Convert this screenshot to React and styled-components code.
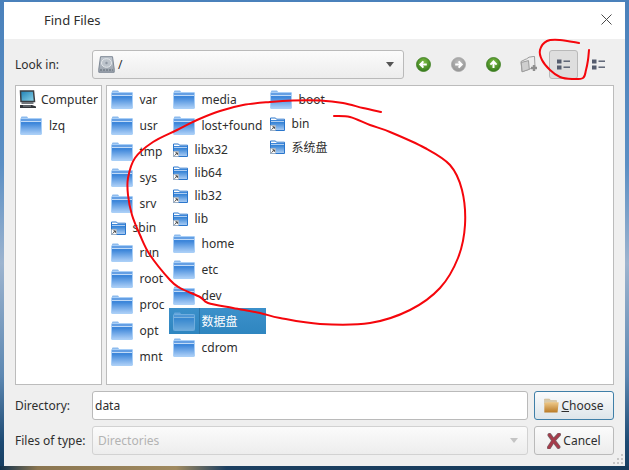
import React from "react";
import styled, { createGlobalStyle } from "styled-components";

const leftColumn = ["var", "usr", "tmp", "sys", "srv", "~sbin", "run", "root", "proc", "opt", "mnt"];
const midColumn = ["media", "lost+found", "~libx32", "~lib64", "~lib32", "~lib", "home", "etc", "dev", "*数据盘", "cdrom"];
const rightColumn = ["boot", "~bin", "~系统盘"];

// hand-drawn marks, traced from the picture
const bigLoop = [
  [381, 112], [363, 108], [343, 103], [320, 100.5], [293, 100.5], [270, 102], [243, 105], [220, 111], [197, 120],
  [177, 130], [153, 142], [135, 158], [128, 178], [128, 195], [132, 215], [140, 235], [150, 255], [170, 280],
  [180, 288], [200, 297], [208, 303], [233, 308], [260, 313], [280, 318], [320, 324], [370, 323], [410, 310],
  [440, 288], [458, 258], [465, 225], [462, 190], [450, 165], [425, 148], [390, 132], [370, 125], [350, 117], [334, 116],
];
const smallLoop = [
  [579, 43], [560, 40], [547, 41], [540, 50], [542, 60], [550, 70], [560, 77], [572, 79], [583, 78], [586, 70], [588, 60], [589, 50],
];

const smoothPath = (pts) => {
  let d = `M${pts[0][0]} ${pts[0][1]}`;
  for (let i = 0; i < pts.length - 1; i++) {
    const p0 = pts[i - 1] || pts[i];
    const p1 = pts[i];
    const p2 = pts[i + 1];
    const p3 = pts[i + 2] || p2;
    const c1x = p1[0] + (p2[0] - p0[0]) / 6;
    const c1y = p1[1] + (p2[1] - p0[1]) / 6;
    const c2x = p2[0] - (p3[0] - p1[0]) / 6;
    const c2y = p2[1] - (p3[1] - p1[1]) / 6;
    d += `C${c1x} ${c1y} ${c2x} ${c2y} ${p2[0]} ${p2[1]}`;
  }
  return d;
};

const GlobalStyle = createGlobalStyle`
  html, body {
    margin: 0;
    padding: 0;
  }
  body {
    font-family: "Noto Sans", "Noto Sans CJK SC", sans-serif;
    font-size: 12px;
    color: #2e2e2e;
  }
`;

const Page = styled.div`
  position: relative;
  box-sizing: border-box;
  width: 629px;
  height: 470px;
  padding: 2px 4px 4px;
  overflow: hidden;
  background:
    linear-gradient(90deg, #12324e 0, #8a7550 6%, #a08a60 28%, #1c3f60 36%, #163a5a 100%) bottom / 100% 4px no-repeat,
    linear-gradient(180deg, #4a81bb 0, #5b8fc4 35%, #9db4cf 56%, #5d88b2 80%, #1d4a73 94%, #173d60 100%);
`;

const Dialog = styled.div`
  position: relative;
  display: flex;
  flex-direction: column;
  height: 100%;
  background: #efefef;
`;

const TitleBar = styled.div`
  display: flex;
  align-items: center;
  justify-content: space-between;
  flex: 0 0 37px;
  padding: 0 13px 0 40px;
  background: #fff;
`;

const Title = styled.span`
  font-size: 13px;
  margin-top: -2px;
`;

const Content = styled.div`
  display: flex;
  flex-direction: column;
  gap: 6px;
  flex: 1;
  padding: 11px;
  min-height: 0;
`;

const LookRow = styled.div`
  display: flex;
  align-items: center;
`;

const FieldLabel = styled.label`
  flex: 0 0 77px;
`;

const Combo = styled.div`
  box-sizing: border-box;
  display: flex;
  align-items: center;
  height: 29px;
  width: ${(p) => p.$width || "auto"};
  padding: 0 5px;
  border: 1px solid ${(p) => (p.$disabled ? "#d2d2d2" : "#bababa")};
  border-radius: 3px;
  background: linear-gradient(180deg, #fbfbfb, #ededed);
  color: ${(p) => (p.$disabled ? "#b3b3b3" : "#2e2e2e")};
`;

const ComboText = styled.span`
  flex: 1;
  margin-left: ${(p) => p.$offset || 0}px;
`;

const Arrow = styled.span`
  width: 0;
  height: 0;
  margin-right: 4px;
  border-left: 4px solid transparent;
  border-right: 4px solid transparent;
  border-top: 5px solid ${(p) => (p.$disabled ? "#c4c4c4" : "#555")};
`;

const Tools = styled.div`
  display: flex;
  gap: 6px;
  margin-left: 5px;
`;

const ToolButton = styled.div`
  box-sizing: border-box;
  display: flex;
  align-items: center;
  justify-content: center;
  width: 29px;
  height: 29px;
  border: 1px solid ${(p) => (p.$active ? "#b9b9b9" : "transparent")};
  border-radius: 3px;
  background: ${(p) => (p.$active ? "#dedede" : "transparent")};
`;

const Panels = styled.div`
  display: flex;
  gap: 4px;
  flex: 0 0 300px;
`;

const Sidebar = styled.div`
  box-sizing: border-box;
  flex: 0 0 87px;
  border: 1px solid #bcbcbc;
  background: #fff;
  overflow: hidden;
`;

const SideItem = styled.div`
  display: flex;
  align-items: center;
  gap: ${(p) => p.$gap}px;
  height: 26px;
  padding-left: ${(p) => p.$indent}px;
  white-space: nowrap;
`;

const FileList = styled.div`
  box-sizing: border-box;
  display: flex;
  align-items: flex-start;
  flex: 1;
  border: 1px solid #bcbcbc;
  background: #fff;
`;

const FileColumn = styled.div`
  display: flex;
  flex-direction: column;
  flex: 0 0 ${(p) => p.$width}px;
`;

const FileItem = styled.div`
  display: flex;
  align-items: center;
  height: ${(p) => (p.$link ? 23 : 26)}px;
  padding-left: 3.5px;
  white-space: nowrap;
  color: ${(p) => (p.$selected ? "#fff" : "inherit")};
  background: ${(p) => (p.$selected ? "linear-gradient(180deg, #3c90ca, #2f86c0)" : "transparent")};

  svg {
    opacity: ${(p) => (p.$selected ? 0.5 : 1)};
  }
`;

const FileName = styled.span`
  display: flex;
  align-items: center;
  align-self: stretch;
  flex: 1;
  margin-left: ${(p) => (p.$selected ? 4 : 7)}px;
  padding-left: ${(p) => (p.$selected ? 2 : 0)}px;
  border-left: ${(p) => (p.$selected ? "1px solid #2a76ab" : "none")};
`;

const BottomGrid = styled.div`
  display: grid;
  grid-template-columns: 77px 436px 80px;
  grid-auto-rows: 29px;
  row-gap: 6px;
  align-items: center;
`;

const TextInput = styled.div`
  box-sizing: border-box;
  display: flex;
  align-items: center;
  height: 29px;
  padding: 0 2px;
  border: 1px solid #bababa;
  border-radius: 3px;
  background: #fff;
`;

const ActionButton = styled.button`
  box-sizing: border-box;
  display: flex;
  align-items: center;
  justify-content: center;
  gap: 2px;
  height: 29px;
  margin-left: 6px;
  width: 80px;
  padding: 0;
  border: 1px solid ${(p) => (p.$focused ? "#3f7fa8" : "#bababa")};
  border-radius: 3px;
  background: ${(p) => (p.$focused ? "linear-gradient(180deg, #fafbfc, #dde5ea)" : "linear-gradient(180deg, #fbfbfb, #ececec)")};
  color: #2e2e2e;
  font: inherit;
`;

const Mnemonic = styled.span`
  text-decoration: underline;
`;

const GripDots = styled.svg`
  position: absolute;
  right: 1px;
  bottom: 1px;
`;

const Scribble = styled.svg`
  position: absolute;
  top: 0;
  left: 0;
  pointer-events: none;
`;

const HiddenDefs = styled.svg`
  position: absolute;
  width: 0;
  height: 0;
`;

const SharedGradients = () => (
  <HiddenDefs aria-hidden="true">
    <defs>
      <linearGradient id="folderFill" x1="0" y1="0" x2="0" y2="1">
        <stop offset="0" stopColor="#327fd7" />
        <stop offset="1" stopColor="#a9cdf6" />
      </linearGradient>
      <linearGradient id="linkFill" x1="0" y1="0" x2="0" y2="1">
        <stop offset="0" stopColor="#2f7fd4" />
        <stop offset="1" stopColor="#a8cbf3" />
      </linearGradient>
      <linearGradient id="orangeFill" x1="0" y1="0" x2="0" y2="1">
        <stop offset="0" stopColor="#eec98a" />
        <stop offset="1" stopColor="#b97a26" />
      </linearGradient>
      <linearGradient id="screenFill" x1="0" y1="0" x2="1" y2="1">
        <stop offset="0" stopColor="#1c7fb4" />
        <stop offset="1" stopColor="#8fd6ea" />
      </linearGradient>
      <linearGradient id="driveFill" x1="0" y1="0" x2="0" y2="1">
        <stop offset="0" stopColor="#c4cbd3" />
        <stop offset="1" stopColor="#98a0aa" />
      </linearGradient>
      <radialGradient id="greenFill" cx="0.5" cy="0.35" r="0.7">
        <stop offset="0" stopColor="#7fbf45" />
        <stop offset="1" stopColor="#2f7318" />
      </radialGradient>
      <radialGradient id="greyFill" cx="0.5" cy="0.35" r="0.7">
        <stop offset="0" stopColor="#bdbdbd" />
        <stop offset="1" stopColor="#8f8f8f" />
      </radialGradient>
    </defs>
  </HiddenDefs>
);

const FolderIcon = () => (
  <svg width="22" height="19" viewBox="0 0 22 19" style={{ flex: "none" }}>
    <path d="M1 1.5q0-1 1-1h5l1.5 2H21q.8 0 .8 1V4H1z" fill="#8dbbee" />
    <rect x="0.5" y="2.5" width="21" height="16" rx="0.8" fill="#6ca6e9" stroke="#a9cff7" />
    <rect x="1" y="3" width="20" height="2.2" fill="#649fe4" />
    <rect x="1" y="5.2" width="20" height="0.9" fill="#d8e9fb" />
    <rect x="1" y="6.1" width="20" height="11.9" fill="url(#folderFill)" />
  </svg>
);

const LinkFolderIcon = () => (
  <svg width="15" height="14" viewBox="0 0 15 14" style={{ flex: "none" }}>
    <path d="M.5 2V1h5l1 1.2h8V13.5H.5z" fill="#fff" stroke="#2a76cc" />
    <rect x="1" y="3" width="13" height="1.4" fill="#3b86d9" />
    <rect x="1" y="5" width="13" height="8" fill="url(#linkFill)" />
    <rect x="0.5" y="8.5" width="5" height="5" fill="#fff" stroke="#a5a5a5" strokeWidth="0.5" />
    <path d="M1.6 12.6 4.2 10M2.4 9.8h2v2" fill="none" stroke="#444" strokeWidth="1" />
  </svg>
);

const ComputerIcon = () => (
  <svg width="18" height="19" viewBox="0 0 18 19" style={{ flex: "none" }}>
    <path d="M1.5 1h13l1 10.5H2z" fill="url(#screenFill)" stroke="#3b3f44" strokeWidth="1.5" />
    <rect x="2.5" y="12" width="12" height="2" fill="#70757b" />
    <path d="M1 15h12l4 1.5V18H1z" fill="#33373c" />
    <path d="M4 16h8" stroke="#8a8f95" />
  </svg>
);

const DriveIcon = () => (
  <svg width="17" height="17" viewBox="0 0 17 17" style={{ flex: "none" }}>
    <path d="M2.5.7h12l1.700 12.300v3.300H.8V13z" fill="url(#driveFill)" stroke="#7d8794" />
    <ellipse cx="8.5" cy="7" rx="5" ry="4.3" fill="#bcc3cb" stroke="#e2e6ea" />
    <circle cx="8.5" cy="7" r="1.2" fill="#8d96a1" />
    <path d="M2 14h13" stroke="#5f6872" strokeDasharray="2 1" />
  </svg>
);

const NavIcon = ({ direction, muted }) => {
  const arrows = {
    left: "M10.8 7.5H4.600M7.4 4.4 4.3 7.5l3.100 3.100",
    right: "M4.2 7.5h6.200M7.6 4.4l3.100 3.100-3.100 3.100",
    up: "M7.5 11V4.800M4.4 7.6l3.100-3.100 3.100 3.100",
  };
  return (
    <svg width="15" height="15" viewBox="0 0 15 15">
      <circle cx="7.5" cy="7.5" r="7" fill={muted ? "url(#greyFill)" : "url(#greenFill)"} stroke={muted ? "#a8a8a8" : "#3d7f22"} strokeWidth="0.8" />
      <path d={arrows[direction]} fill="none" stroke="#fff" strokeWidth="2" />
    </svg>
  );
};

const NewFolderIcon = () => (
  <svg width="18" height="17" viewBox="0 0 18 17">
    <path d="M1 5.5 6 3l.6-.1L9 1.200l5.500-.9.500 10.700L2 15.800z" fill="#ececec" stroke="#9c9c9c" />
    <path d="M1.2 6.5 8.5 4.600l.8 8.800-7.100 2.300z" fill="#cfcfcf" stroke="#9c9c9c" />
    <path d="M14 9v6M11 12h6" stroke="#8e8e8e" strokeWidth="2.4" />
  </svg>
);

const DetailViewIcon = () => (
  <svg width="13" height="11" viewBox="0 0 13 11">
    <rect x="0" y="0.5" width="4.5" height="4" fill="#555c6e" />
    <rect x="0" y="6.5" width="4.5" height="4" fill="#555c6e" />
    <rect x="6.5" y="1.5" width="6.5" height="1.4" fill="#555c6e" />
    <rect x="6.5" y="7.5" width="6.5" height="1.4" fill="#555c6e" />
  </svg>
);

const CloseIcon = () => (
  <svg width="11" height="11" viewBox="0 0 11 11" style={{ marginTop: -2 }}>
    <path d="M.5.5l10 10M10.5.5l-10 10" stroke="#4a4a4a" strokeWidth="1" />
  </svg>
);

const OpenFolderIcon = () => (
  <svg width="15" height="15" viewBox="0 0 15 15" style={{ flex: "none" }}>
    <path d="M.5 2V1h5l1 1.5h6V6H.5z" fill="#d9c9a8" stroke="#c8b48c" strokeWidth="0.5" />
    <path d="M.3 14.5V5l3-.8h11.400L13.500 14.500z" fill="url(#orangeFill)" />
  </svg>
);

const CancelIcon = () => (
  <svg width="14" height="16" viewBox="0 0 14 16" style={{ flex: "none" }}>
    <g fill="none" strokeLinecap="round">
      <path d="M2.5 2 Q6 7 11.500 14M12 1.500 Q6 7 2 14.500" stroke="#77696c" strokeWidth="4" />
      <path d="M2.5 2 Q6 7 11.500 14M12 1.500 Q6 7 2 14.500" stroke="#a53c4b" strokeWidth="2.8" />
    </g>
  </svg>
);

const ResizeGrip = () => (
  <GripDots width="12" height="12" viewBox="0 0 12 12" fill="#c6c6c6">
    {[[9, 0], [5, 4], [9, 4], [1, 8], [5, 8], [9, 8]].map(([x, y]) => (
      <rect key={`${x}-${y}`} x={x} y={y + 1} width="2" height="2" />
    ))}
  </GripDots>
);

const RedMarks = () => (
  <Scribble width="629" height="470" viewBox="0 0 629 470" fill="none" stroke="#f5060c" strokeWidth="2" strokeLinecap="round">
    <path d={smoothPath(bigLoop)} />
    <path d={smoothPath(smallLoop)} />
  </Scribble>
);

const Entry = ({ entry }) => {
  const isLink = entry.startsWith("~");
  const isSelected = entry.startsWith("*");
  const name = isLink || isSelected ? entry.slice(1) : entry;
  return (
    <FileItem $link={isLink} $selected={isSelected}>
      {isLink ? <LinkFolderIcon /> : <FolderIcon />}
      <FileName $selected={isSelected}>{name}</FileName>
    </FileItem>
  );
};

const App = () => (
  <>
    <GlobalStyle />
    <SharedGradients />
    <Page>
      <Dialog>
        <TitleBar>
          <Title>Find Files</Title>
          <CloseIcon />
        </TitleBar>
        <Content>
          <LookRow>
            <FieldLabel>Look in:</FieldLabel>
            <Combo $width="312px">
              <DriveIcon />
              <ComboText $offset={3}>/</ComboText>
              <Arrow />
            </Combo>
            <Tools>
              <ToolButton><NavIcon direction="left" /></ToolButton>
              <ToolButton><NavIcon direction="right" muted /></ToolButton>
              <ToolButton><NavIcon direction="up" /></ToolButton>
              <ToolButton><NewFolderIcon /></ToolButton>
              <ToolButton $active><DetailViewIcon /></ToolButton>
              <ToolButton><DetailViewIcon /></ToolButton>
            </Tools>
          </LookRow>
          <Panels>
            <Sidebar>
              <SideItem $indent={3} $gap={4}>
                <ComputerIcon />
                Computer
              </SideItem>
              <SideItem $indent={4} $gap={7}>
                <FolderIcon />
                lzq
              </SideItem>
            </Sidebar>
            <FileList>
              <FileColumn $width={62}>
                {leftColumn.map((entry) => <Entry key={entry} entry={entry} />)}
              </FileColumn>
              <FileColumn $width={97}>
                {midColumn.map((entry) => <Entry key={entry} entry={entry} />)}
              </FileColumn>
              <FileColumn $width={97}>
                {rightColumn.map((entry) => <Entry key={entry} entry={entry} />)}
              </FileColumn>
            </FileList>
          </Panels>
          <BottomGrid>
            <FieldLabel>Directory:</FieldLabel>
            <TextInput>data</TextInput>
            <ActionButton $focused>
              <OpenFolderIcon />
              <span><Mnemonic>C</Mnemonic>hoose</span>
            </ActionButton>
            <FieldLabel>Files of type:</FieldLabel>
            <Combo $disabled>
              <ComboText>Directories</ComboText>
              <Arrow $disabled />
            </Combo>
            <ActionButton>
              <CancelIcon />
              <span>Cancel</span>
            </ActionButton>
          </BottomGrid>
        </Content>
        <ResizeGrip />
      </Dialog>
      <RedMarks />
    </Page>
  </>
);

export default App;
